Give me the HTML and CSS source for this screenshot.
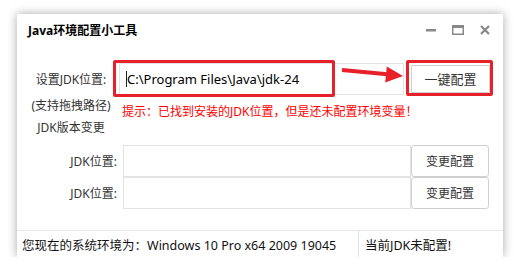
FILE: index.html
```html
<!DOCTYPE html>
<html lang="zh-CN">
<head>
<meta charset="utf-8">
<title>Java环境配置小工具</title>
<link rel="stylesheet" href="styles.css">
</head>
<body>
<div class="window">
  <div class="titlebar">
    <div class="title">Java环境配置小工具</div>
    <div class="controls">
      <svg class="ctl" width="10" height="10" viewBox="0 0 10 10"><rect x="0" y="4" width="10" height="2.5" fill="#888"/></svg>
      <svg class="ctl" width="12" height="10" viewBox="0 0 12 10"><rect x="0.75" y="0.75" width="10.5" height="8.5" fill="none" stroke="#888" stroke-width="1.5"/><rect x="0" y="0" width="12" height="3" fill="#888"/></svg>
      <svg class="ctl" width="10" height="10" viewBox="0 0 10 10"><path d="M1 1 L9 9 M9 1 L1 9" stroke="#888" stroke-width="2.2"/></svg>
    </div>
  </div>
  <div class="body">
    <div class="row-main">
      <div class="lbl-main">设置JDK位置:</div>
      <div class="input input-main"><span class="caret"></span>C:\Program Files\Java\jdk-24</div>
      <div class="btn btn-main">一键配置</div>
    </div>
    <div class="row-note">
      <div class="note-left">
        <div>(支持拖拽路径)</div>
        <div>JDK版本变更</div>
      </div>
      <div class="hint">提示：已找到安装的JDK位置，但是还未配置环境变量！</div>
    </div>
    <div class="row-jdk">
      <div class="lbl-jdk">JDK位置:</div>
      <div class="input input-jdk"></div>
      <div class="btn btn-jdk">变更配置</div>
    </div>
    <div class="row-jdk">
      <div class="lbl-jdk">JDK位置:</div>
      <div class="input input-jdk"></div>
      <div class="btn btn-jdk">变更配置</div>
    </div>
  </div>
  <div class="statusbar">
    <div class="status-left">您现在的系统环境为：Windows 10 Pro x64 2009 19045</div>
    <div class="status-right">当前JDK未配置!</div>
  </div>
  <div class="mark mark-input"></div>
  <div class="mark mark-btn"></div>
  <svg class="arrow" width="70" height="26" viewBox="0 0 70 26">
    <line x1="2" y1="6" x2="50" y2="10.5" stroke="#e8202a" stroke-width="4"/>
    <polygon points="46.8,2.5 45.2,18.5 63,12" fill="#e8202a"/>
  </svg>
</div>
</body>
</html>
```
FILE: styles.css
```css
* { box-sizing: border-box; }
html, body { margin: 0; padding: 0; background: #fff; }
body {
  font-family: "Noto Sans", "Noto Sans CJK SC", sans-serif;
  font-size: 12px;
  color: #333;
}
.window {
  position: relative;
  margin: 14px 0 0 17px;
  width: 486px;
  height: 243px;
  background: #fff;
  box-shadow: 0 0 9px rgba(0,0,0,0.35);
  display: flex;
  flex-direction: column;
}
.titlebar {
  height: 32px;
  display: flex;
  align-items: center;
  justify-content: space-between;
  padding: 0 13px 0 11px;
}
.title {
  font-weight: bold;
  color: #000;
  font-size: 12px;
}
.controls {
  display: flex;
  align-items: center;
  gap: 16px;
}
.body {
  flex: 1;
  display: flex;
  flex-direction: column;
}
.row-main {
  margin-top: 14px;
  height: 37px;
  display: flex;
  align-items: center;
}
.lbl-main {
  width: 88px;
  margin-left: 10px;
  text-align: center;
}
.input {
  border: 1px solid #e3e3e3;
  background: #fff;
  color: #000;
  display: flex;
  align-items: center;
}
.input-main {
  margin-left: 4px;
  width: 285px;
  height: 32px;
  padding-left: 6px;
  font-size: 13px;
}
.caret {
  width: 1px;
  height: 16px;
  background: #123;
  margin-right: 0;
}
.btn {
  border: 1px solid #d0d0d0;
  display: flex;
  align-items: center;
  justify-content: center;
  color: #333;
  background: #fff;
}
.btn-main {
  margin-left: 7px;
  width: 79px;
  height: 28px;
  font-size: 13px;
}
.row-note {
  height: 48px;
  display: flex;
}
.note-left {
  width: 88px;
  margin-left: 10px;
  margin-top: -2px;
  text-align: center;
  line-height: 22px;
}
.hint {
  margin-left: 7px;
  margin-top: 5px;
  line-height: 20px;
  color: #f00;
}
.row-jdk {
  height: 32px;
  display: flex;
  align-items: stretch;
}
.lbl-jdk {
  width: 100px;
  text-align: right;
  align-self: center;
}
.input-jdk {
  margin-left: 6px;
  width: 288px;
}
.btn-jdk {
  width: 78px;
  border-radius: 3px;
}
.statusbar {
  height: 27px;
  border-top: 1px solid #e6e6e6;
  display: flex;
  align-items: center;
  color: #111;
  font-size: 12.5px;
}
.status-left {
  width: 342px;
  padding-left: 5px;
  align-self: stretch;
  display: flex;
  align-items: center;
  border-right: 1px solid #d5e4f2;
}
.status-right {
  padding-left: 6px;
}
.mark {
  position: absolute;
  border: 3px solid #e8202a;
  border-radius: 2px;
}
.mark-input { left: 96px; top: 46px; width: 222px; height: 37px; }
.mark-btn { left: 389px; top: 46px; width: 87px; height: 36px; }
.arrow {
  position: absolute;
  left: 323px;
  top: 50px;
}
```
